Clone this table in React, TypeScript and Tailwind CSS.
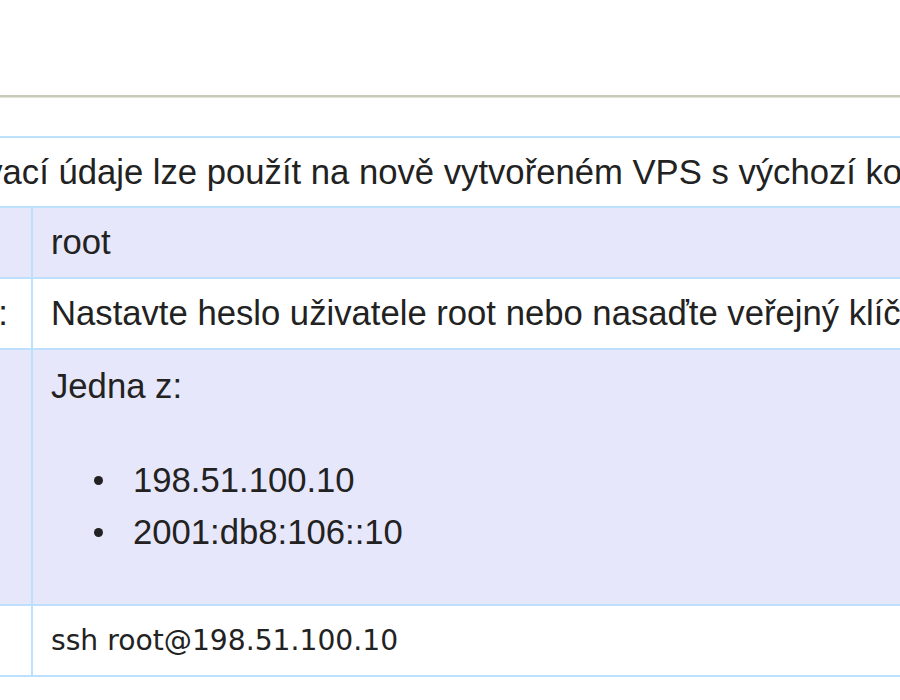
const LAVENDER = "bg-[#e7e7fb]";

function Row({
  label,
  shaded,
  children,
  className = "",
}: {
  label?: string;
  shaded?: boolean;
  children: React.ReactNode;
  className?: string;
}) {
  return (
    <div className={`flex border-b-2 border-[#bde0ff] ${shaded ? LAVENDER : "bg-white"}`}>
      <div className="w-[203px] shrink-0 border-r-2 border-[#bde0ff] pl-[18px] whitespace-nowrap py-[8px]">
        {label}
      </div>
      <div className={`flex-1 pl-[18px] whitespace-nowrap ${className}`}>{children}</div>
    </div>
  );
}

export default function App() {
  return (
    <div className="min-h-[700px] w-[900px] overflow-hidden bg-white text-[#222] font-['Liberation_Sans',Arial,sans-serif] text-[34.67px] leading-[52px]">
      <div className="h-[95px]" />
      <div className="h-[3px] border-t-2 border-b border-t-[#c9cab9] border-b-[#e3e4d8]" />

      <div className="mt-[38px] ml-[-170px] w-[1300px] border-t-2 border-[#bde0ff]">
        <div className="h-[70px] border-b-2 border-[#bde0ff] pl-[30px] pt-[8px] whitespace-nowrap">
          Přihlašovací údaje lze použít na nově vytvořeném VPS s výchozí konfigurací.
        </div>

        <Row label="Uživatel:" shaded className="py-[8px] h-[69px]">
          root
        </Row>

        <Row label="Heslo/klíč:" className="py-[8px] h-[69px]">
          Nastavte heslo uživatele root nebo nasaďte veřejný klíč SSH.
        </Row>

        <Row label="Adresa:" shaded className="pt-[10px] pb-[9px]">
          <div>Jedna z:</div>
          <ul className="mt-[42px] mb-[37px]">
            {["198.51.100.10", "2001:db8:106::10"].map(ip => (
              <li key={ip} className="flex items-center">
                <span className="ml-[43px] mr-[30px] h-[9px] w-[9px] rounded-full bg-[#222]" />
                {ip}
              </li>
            ))}
          </ul>
        </Row>

        <Row label="Příkaz:" className="h-[69px] flex items-center font-['DejaVu_Sans',sans-serif] text-[28.2px]">
          ssh root@198.51.100.10
        </Row>
      </div>
    </div>
  );
}
